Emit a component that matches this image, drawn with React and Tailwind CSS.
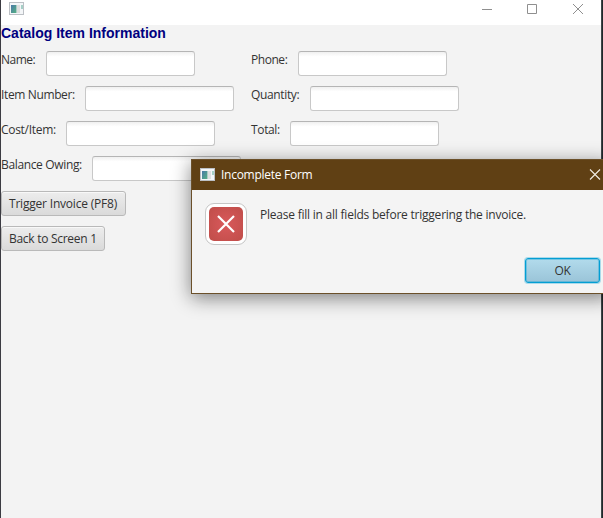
function WindowIcon({ className }) {
  return (
    <svg className={className} width="16" height="14" viewBox="0 0 16 14">
      <defs>
        <linearGradient id="pane" x1="0" y1="0" x2="1" y2="1">
          <stop offset="0" stopColor="#4a78a8" />
          <stop offset="1" stopColor="#55b083" />
        </linearGradient>
      </defs>
      <rect x="0.5" y="0.5" width="14" height="12" fill="#f4f6f8" stroke="#bcc0c5" />
      <rect x="2" y="3" width="5" height="8" fill="url(#pane)" />
      <rect x="7" y="3" width="1" height="8" fill="#a9cbc4" />
      <rect x="8" y="3" width="3" height="8" fill="#dedede" />
      <rect x="12" y="3" width="2" height="4" fill="#a5cfc6" />
    </svg>
  );
}

function Field({ label, width, tracking }) {
  return (
    <div className="flex h-[25px] gap-[10px]">
      <span className={`${width} ${tracking} shrink-0 whitespace-nowrap leading-[17px]`}>{label}</span>
      <div className="h-[25px] w-[149px] shrink-0 rounded-[3px] border border-[#c8c8c8] border-t-[#b5b5b5] bg-white bg-linear-to-b from-[#f0f0f0] to-white to-20%" />
    </div>
  );
}

function Button({ children, className }) {
  return (
    <button
      className={`${className} flex h-[25px] items-center rounded-[3px] border border-[#b9b9b9] bg-linear-to-b from-[#ededed] to-[#dadada] pl-[7px] whitespace-nowrap shadow-[inset_0_1px_0_#f8f8f8]`}
    >
      {children}
    </button>
  );
}

export default function App() {
  return (
    <div className="relative h-[518px] w-[603px] overflow-hidden border-l border-[#3b3b42] bg-[#f3f3f3] font-['Open_Sans',sans-serif] text-[12px] text-[#333333]">
      <header className="flex h-[25px] w-[600px] items-start justify-between bg-white">
        <WindowIcon className="mt-[2px] ml-[8px]" />
        <svg width="102" height="12" viewBox="0 0 102 12" className="mt-[3px] mr-[17px]" fill="none" stroke="#8f8f8f">
          <path d="M0 6.5H10" />
          <path d="M45.5 1.5h9v9h-9z" />
          <path d="M91 1L101 11M101 1L91 11" />
        </svg>
      </header>
      <main className="flex h-[493px] w-[600px] flex-col">
        <h1 className="h-[26px] font-['Liberation_Sans',Arial,sans-serif] text-[14px] leading-[17px] font-bold text-[#000080]">
          Catalog Item Information
        </h1>
        <div className="grid grid-cols-[250px_350px] gap-y-[10px]">
          <Field label="Name:" width="w-[35px]" tracking="tracking-[-0.5px]" />
          <Field label="Phone:" width="w-[37px]" tracking="tracking-[-0.45px]" />
          <Field label="Item Number:" width="w-[74px]" tracking="tracking-[-0.37px]" />
          <Field label="Quantity:" width="w-[49px]" tracking="tracking-[-0.35px]" />
          <Field label="Cost/Item:" width="w-[55px]" tracking="tracking-[-0.3px]" />
          <Field label="Total:" width="w-[29px]" tracking="tracking-[-0.35px]" />
          <Field label="Balance Owing:" width="w-[81px]" tracking="tracking-[-0.35px]" />
        </div>
        <div className="mt-[10px] flex flex-col gap-[10px]">
          <Button className="w-[125px] tracking-[-0.2px]">Trigger Invoice (PF8)</Button>
          <Button className="w-[104px] tracking-[-0.28px]">Back to Screen 1</Button>
        </div>
      </main>
      <div className="absolute top-0 right-0 h-full w-[2px] border-l border-[#3f4649] bg-[#20282b]" />
      <section className="absolute top-[159px] left-[190px] h-[135px] w-[420px] border border-[#6b502a] bg-[#f4f4f4] shadow-[0_4px_18px_rgba(0,0,0,0.48)]">
        <div className="flex h-[30px] w-[409px] items-center bg-[#604014] text-white shadow-[10px_0_0_#604014]">
          <WindowIcon className="ml-[8px]" />
          <span className="ml-[5px] grow tracking-[-0.27px]">Incomplete Form</span>
          <svg width="12" height="12" viewBox="0 0 12 12" stroke="#f1ece4" strokeWidth="1.1" fill="none">
            <path d="M1 0.5L11 10.5M11 0.5L1 10.5" />
          </svg>
        </div>
        <div className="flex pt-[13px] pl-[13px]">
          <div className="flex h-[42px] w-[42px] rounded-[9px] border border-[#c6c6c6] bg-white p-[3px]">
            <div className="flex h-[34px] w-[34px] items-center justify-center rounded-[5px] bg-radial from-[#d9595b] to-[#bf4d49]">
              <svg width="20" height="20" viewBox="0 0 20 20" stroke="#fff" strokeWidth="2.2" fill="none">
                <path d="M2 2L18 18M18 2L2 18" />
              </svg>
            </div>
          </div>
          <p className="mt-[3px] ml-[13px] leading-[17px] tracking-[-0.225px] whitespace-nowrap">
            Please fill in all fields before triggering the invoice.
          </p>
        </div>
        <button className="mt-[13px] ml-[333px] flex h-[25px] w-[75px] items-center justify-center rounded-[3px] border border-[#039ed3] bg-linear-to-b from-[#b2dbec] to-[#9ac4d8] tracking-[-0.3px] shadow-[0_0_0_1px_rgba(3,158,211,0.3),inset_0_0_0_1px_rgba(3,158,211,0.35)]">
          OK
        </button>
      </section>
    </div>
  );
}
